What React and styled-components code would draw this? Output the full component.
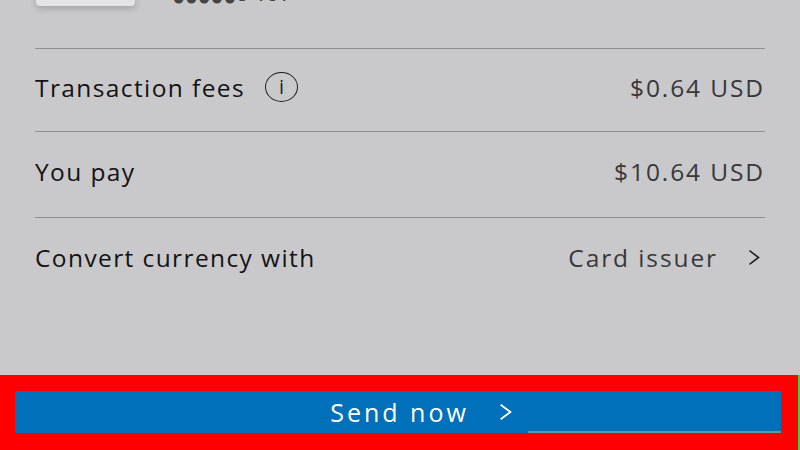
import React from "react";
import styled, { createGlobalStyle } from "styled-components";

const GlobalStyle = createGlobalStyle`
  html, body {
    margin: 0;
    padding: 0;
    background: #c9c9cb;
  }
  body {
    font-family: "Open Sans", "Noto Sans", sans-serif;
  }
`;

const Screen = styled.div`
  width: 800px;
  height: 450px;
  overflow: hidden;
  background: #c9c9cb;
  display: flex;
  flex-direction: column;
`;

const Content = styled.div`
  flex: 1;
  padding: 0 35px;
  display: flex;
  flex-direction: column;
`;

const CardRow = styled.div`
  display: flex;
  align-items: flex-end;
  gap: 37px;
  height: 49px;
  padding-left: 1px;
  padding-bottom: 42px;
  border-bottom: 1px solid #8e8e90;
  box-sizing: border-box;
`;

const CardThumb = styled.div`
  flex: none;
  width: 99px;
  height: 60px;
  border-radius: 4px;
  background: #e4e4e6;
  box-shadow: 0 3px 6px rgba(0, 0, 0, 0.18);
`;

const CardNumber = styled.span`
  font-size: 24px;
  letter-spacing: 0.5px;
  color: #444;
  line-height: 1;
  margin-bottom: -1px;
  white-space: nowrap;
`;

const Dots = styled.span`
  font-size: 22px;
  letter-spacing: -0.5px;
  vertical-align: -4px;
  margin-right: 1px;
`;

const Row = styled.div`
  display: flex;
  align-items: center;
  justify-content: space-between;
  height: ${(p) => p.$h}px;
  padding-bottom: 6px;
  border-bottom: ${(p) => (p.$last ? "none" : "1px solid #8e8e90")};
  box-sizing: border-box;
`;

const Label = styled.span`
  display: flex;
  align-items: center;
  gap: 20px;
  font-size: 24.5px;
  letter-spacing: 1.4px;
  color: #131313;
`;

const Value = styled.span`
  display: flex;
  align-items: center;
  gap: 30px;
  padding-right: ${(p) => (p.$link ? 5 : 0)}px;
  font-size: 24.5px;
  letter-spacing: 1.9px;
  color: #38383a;
`;

const InfoIcon = styled.span`
  width: 33px;
  height: 30px;
  border: 1.5px solid #1e1e1e;
  border-radius: 50%;
  box-sizing: border-box;
  display: flex;
  align-items: center;
  justify-content: center;
  font-size: 20px;
  letter-spacing: 0;
  color: #1e1e1e;
  line-height: 1;
`;

const Footer = styled.div`
  height: 75px;
  background: #ff0000;
  box-sizing: border-box;
  padding: 16px 17px 17px 15px;
  border-right: 2px solid #3fcf3a;
  display: flex;
`;

const SendButton = styled.button`
  flex: 1;
  height: 42px;
  border: none;
  background: #0070ba;
  color: #fff;
  font-family: "Open Sans", "Noto Sans", sans-serif;
  font-size: 25px;
  letter-spacing: 3px;
  display: flex;
  align-items: center;
  justify-content: center;
  gap: 30px;
  padding: 0 0 0 46px;
  position: relative;
  cursor: pointer;

  &::after {
    content: "";
    position: absolute;
    left: 513px;
    right: 0;
    bottom: 0;
    height: 2px;
    background: #5a9aa0;
  }
`;

const Chevron = ({ color = "#222", w = 12, h = 16 }) => (
  <svg width={w} height={h} viewBox="0 0 12 16" fill="none" preserveAspectRatio="none">
    <path d="M1.5 1.5 L10.5 8 L1.5 14.5" stroke={color} strokeWidth="1.6" />
  </svg>
);

export default function App() {
  return (
    <Screen>
      <GlobalStyle />
      <Content>
        <CardRow>
          <CardThumb />
          <CardNumber>
            <Dots>●●●●●</Dots>9407
          </CardNumber>
        </CardRow>
        <Row $h={83}>
          <Label>
            Transaction fees
            <InfoIcon>i</InfoIcon>
          </Label>
          <Value>$0.64 USD</Value>
        </Row>
        <Row $h={86}>
          <Label>You pay</Label>
          <Value>$10.64 USD</Value>
        </Row>
        <Row $h={84} $last>
          <Label>Convert currency with</Label>
          <Value $link>
            Card issuer
            <Chevron w={12} h={17} />
          </Value>
        </Row>
      </Content>
      <Footer>
        <SendButton>
          Send now
          <Chevron color="#fff" w={13} h={18} />
        </SendButton>
      </Footer>
    </Screen>
  );
}
